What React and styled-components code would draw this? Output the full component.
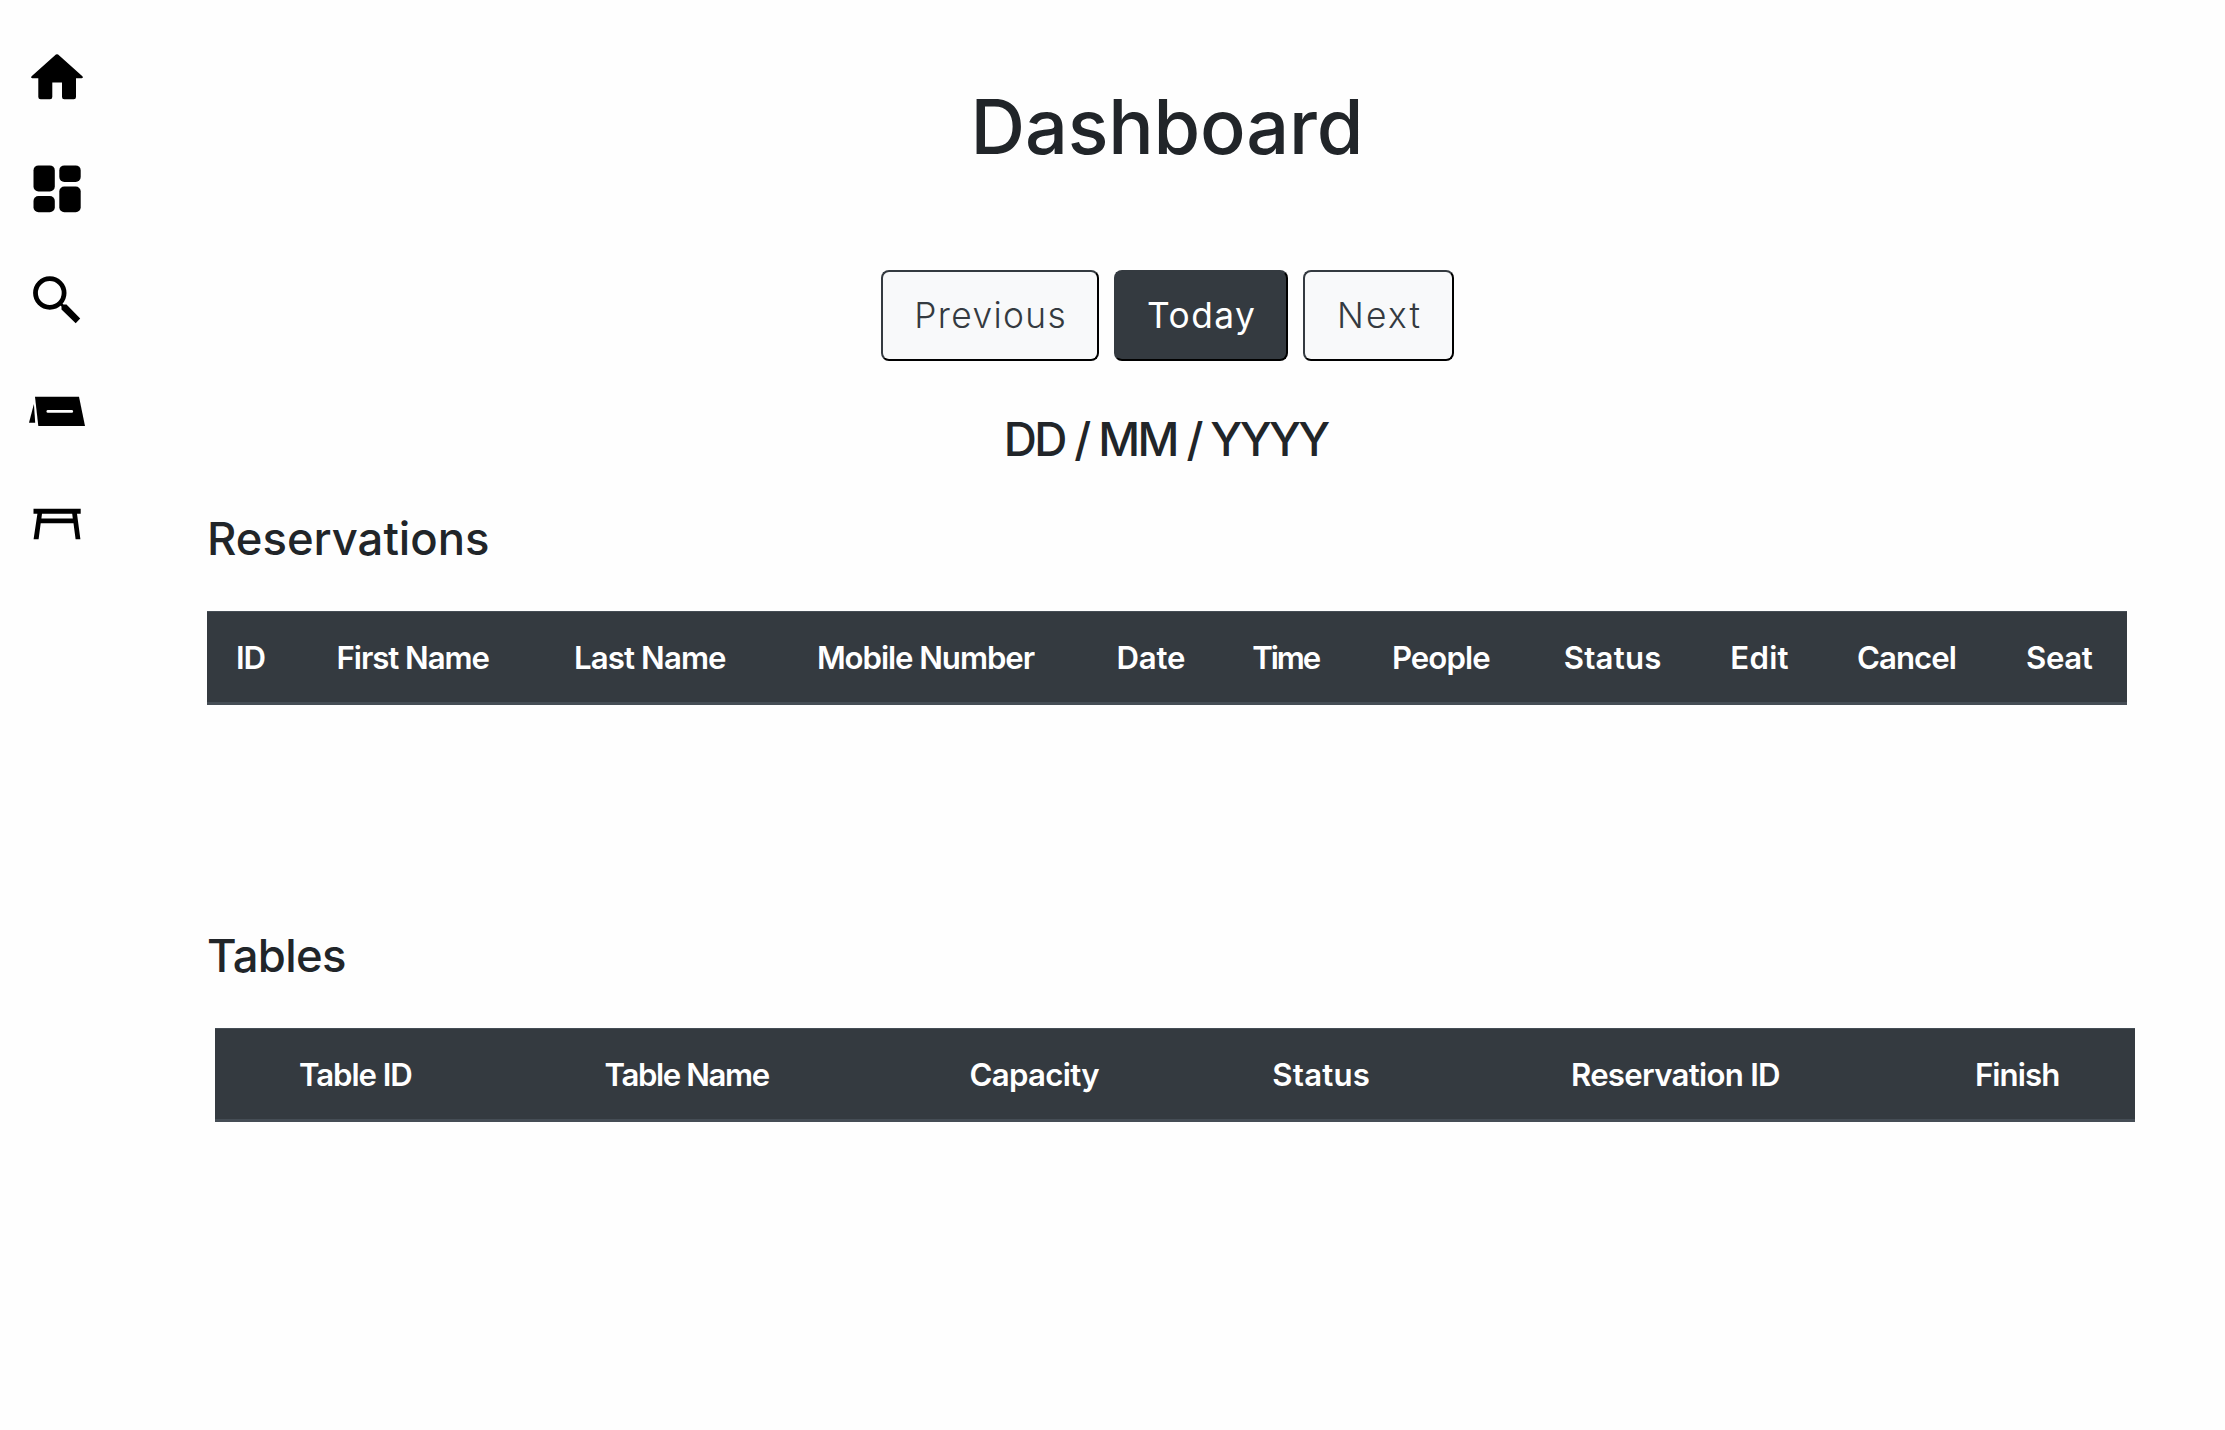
import React from "react";
import styled, { createGlobalStyle } from "styled-components";

const GlobalStyle = createGlobalStyle`
  *, *::before, *::after { box-sizing: border-box; }
  body {
    margin: 0;
    background: #fefefe;
    color: #212529;
    font-family: Inter, "Liberation Sans", sans-serif;
  }
`;

const Page = styled.div`
  display: flex;
  min-height: 1430px;
`;

const Sidebar = styled.nav`
  display: flex;
  flex-direction: column;
  flex: none;
  gap: 52px;
  width: 207px;
  padding: 47px 0 0 27px;
`;

const NavLink = styled.a`
  display: block;
  width: 60px;
  height: 60px;
  color: #000;
`;

const Icon = styled.svg`
  display: block;
  width: 100%;
  height: 100%;
  fill: currentColor;
`;

const Main = styled.main`
  display: flex;
  flex-direction: column;
  width: 1920px;
  padding-top: 82px;
`;

const Label = styled.span`
  letter-spacing: ${(p) => p.$track || 0}px;
  margin-right: ${(p) => -(p.$track || 0)}px;
  white-space: nowrap;
`;

const Title = styled.h1`
  margin: 0 0 98px;
  font-size: 75.6px;
  line-height: 90px;
  font-weight: 500;
  text-align: center;
`;

const DateNav = styled.div`
  display: flex;
  justify-content: center;
  gap: 15px;
  padding-left: 1px;
`;

const DateButton = styled.button`
  width: ${(p) => p.$width}px;
  height: 91px;
  padding: 0;
  border: 2px solid;
  border-color: #343a40 #000 #000 #343a40;
  border-radius: 8px;
  background: ${(p) => (p.$active ? "#343a40" : "#f8f9fa")};
  color: ${(p) => (p.$active ? "#fff" : "#343a40")};
  font: ${(p) => (p.$active ? 400 : 350)} 35.3px Inter, "Liberation Sans", sans-serif;
`;

const CurrentDate = styled.h3`
  margin: 51px 0 43px;
  font-size: 45.9px;
  line-height: 56px;
  font-weight: 500;
  text-align: center;
`;

const Section = styled.section`
  & + & { margin-top: 223px; }
`;

const SectionTitle = styled.h4`
  margin: 0 0 44px;
  font-size: 45.4px;
  line-height: 56px;
  font-weight: 500;
`;

const HeaderRow = styled.div`
  display: grid;
  grid-template-columns: ${(p) => p.$columns};
  width: 1920px;
  height: 94px;
  margin-left: ${(p) => p.$indent || 0}px;
  border-top: 1px solid #454d55;
  border-bottom: 3px solid #454d55;
  background: #343a40;
`;

const HeaderCell = styled.div`
  display: flex;
  align-items: center;
  justify-content: center;
  padding-top: 1px;
  color: #fff;
  font-size: 31.2px;
  font-weight: 600;
`;

const reservationColumns = [
  { label: "ID", width: 88, track: -1.3 },
  { label: "First Name", width: 236.6, track: -1.07 },
  { label: "Last Name", width: 237.4, track: -0.9 },
  { label: "Mobile Number", width: 314, track: -1.07 },
  { label: "Date", width: 136, track: -0.2 },
  { label: "Time", width: 135.4, track: -2.1 },
  { label: "People", width: 173.8, track: -0.92 },
  { label: "Status", width: 168.8, track: 0.22 },
  { label: "Edit", width: 125, track: 0.27 },
  { label: "Cancel", width: 170, track: -0.96 },
  { label: "Seat", width: 135, track: -0.4 },
];

const tableColumns = [
  { label: "Table ID", width: 281.8, track: -1.1 },
  { label: "Table Name", width: 381.2, track: -1.39 },
  { label: "Capacity", width: 313.2, track: -0.66 },
  { label: "Status", width: 260, track: 0.22 },
  { label: "Reservation ID", width: 449.2, track: -0.72 },
  { label: "Finish", width: 234.6, track: -0.9 },
];

function TableHeader({ columns, indent }) {
  return (
    <HeaderRow $columns={columns.map((c) => `${c.width}px`).join(" ")} $indent={indent}>
      {columns.map((c) => (
        <HeaderCell key={c.label}>
          <Label $track={c.track}>{c.label}</Label>
        </HeaderCell>
      ))}
    </HeaderRow>
  );
}

const HomeIcon = () => (
  <Icon viewBox="0 0 60 60">
    <path d="M28.9 7.6Q30 6.7 31.1 7.6L55.4 29.3Q56.6 31.2 54.6 31.2H49V50Q49 52.3 46.7 52.3H37.3Q35 52.3 35 50V35.5H25.3V50Q25.3 52.3 23 52.3H13.7Q11.3 52.3 11.3 50V31.2H5.4Q3.4 31.2 4.6 29.3Z" />
  </Icon>
);

const DashboardIcon = () => (
  <Icon viewBox="0 0 60 60">
    <rect x="6.5" y="6.4" width="21.3" height="26" rx="5" />
    <rect x="32.3" y="6.4" width="21.4" height="16.6" rx="5" />
    <rect x="6.5" y="37" width="21.3" height="16.3" rx="5" />
    <rect x="32.3" y="27.5" width="21.4" height="25.8" rx="5" />
  </Icon>
);

const SearchIcon = () => (
  <Icon viewBox="0 0 60 60">
    <circle cx="22.8" cy="22" r="14.3" fill="none" stroke="currentColor" strokeWidth="4.8" />
    <path d="M32.4 33.6L34.4 31.6L36.4 33.6H39.5L53.2 47.4L48.7 52.2L34.5 38.5V35.6Z" />
  </Icon>
);

const ReservationIcon = () => (
  <Icon viewBox="0 0 60 60">
    <path d="M8 13.7H52L58 43H11.3Z" />
    <path d="M6.9 21L8.2 39.8H2Z" />
    <path d="M20.8 28.4H44.8" fill="none" stroke="#fff" strokeWidth="2.6" strokeLinecap="round" />
  </Icon>
);

const TableIcon = () => (
  <Icon viewBox="0 0 60 60">
    <path d="M6.5 13.8H53.7V18.8H50L53.4 44.3H48.6L46.5 28.2H13.7L11.6 44.3H6.6L10.4 18.8H6.5ZM15 18.8L14.4 23.6H45.8L45.2 18.8Z" />
  </Icon>
);

const navItems = [HomeIcon, DashboardIcon, SearchIcon, ReservationIcon, TableIcon];

export default function App() {
  return (
    <>
      <GlobalStyle />
      <Page>
        <Sidebar>
          {navItems.map((Glyph) => (
            <NavLink key={Glyph.name}>
              <Glyph />
            </NavLink>
          ))}
        </Sidebar>
        <Main>
          <Title>
            <Label $track={-0.17}>Dashboard</Label>
          </Title>
          <DateNav>
            <DateButton $width={218}>
              <Label $track={1.35}>Previous</Label>
            </DateButton>
            <DateButton $width={174} $active>
              <Label $track={1.5}>Today</Label>
            </DateButton>
            <DateButton $width={151}>
              <Label $track={2.3}>Next</Label>
            </DateButton>
          </DateNav>
          <CurrentDate>
            <Label $track={-2.62}>DD / MM / YYYY</Label>
          </CurrentDate>
          <Section>
            <SectionTitle>
              <Label>Reservations</Label>
            </SectionTitle>
            <TableHeader columns={reservationColumns} />
          </Section>
          <Section>
            <SectionTitle>
              <Label $track={-0.64}>Tables</Label>
            </SectionTitle>
            <TableHeader columns={tableColumns} indent={8} />
          </Section>
        </Main>
      </Page>
    </>
  );
}
